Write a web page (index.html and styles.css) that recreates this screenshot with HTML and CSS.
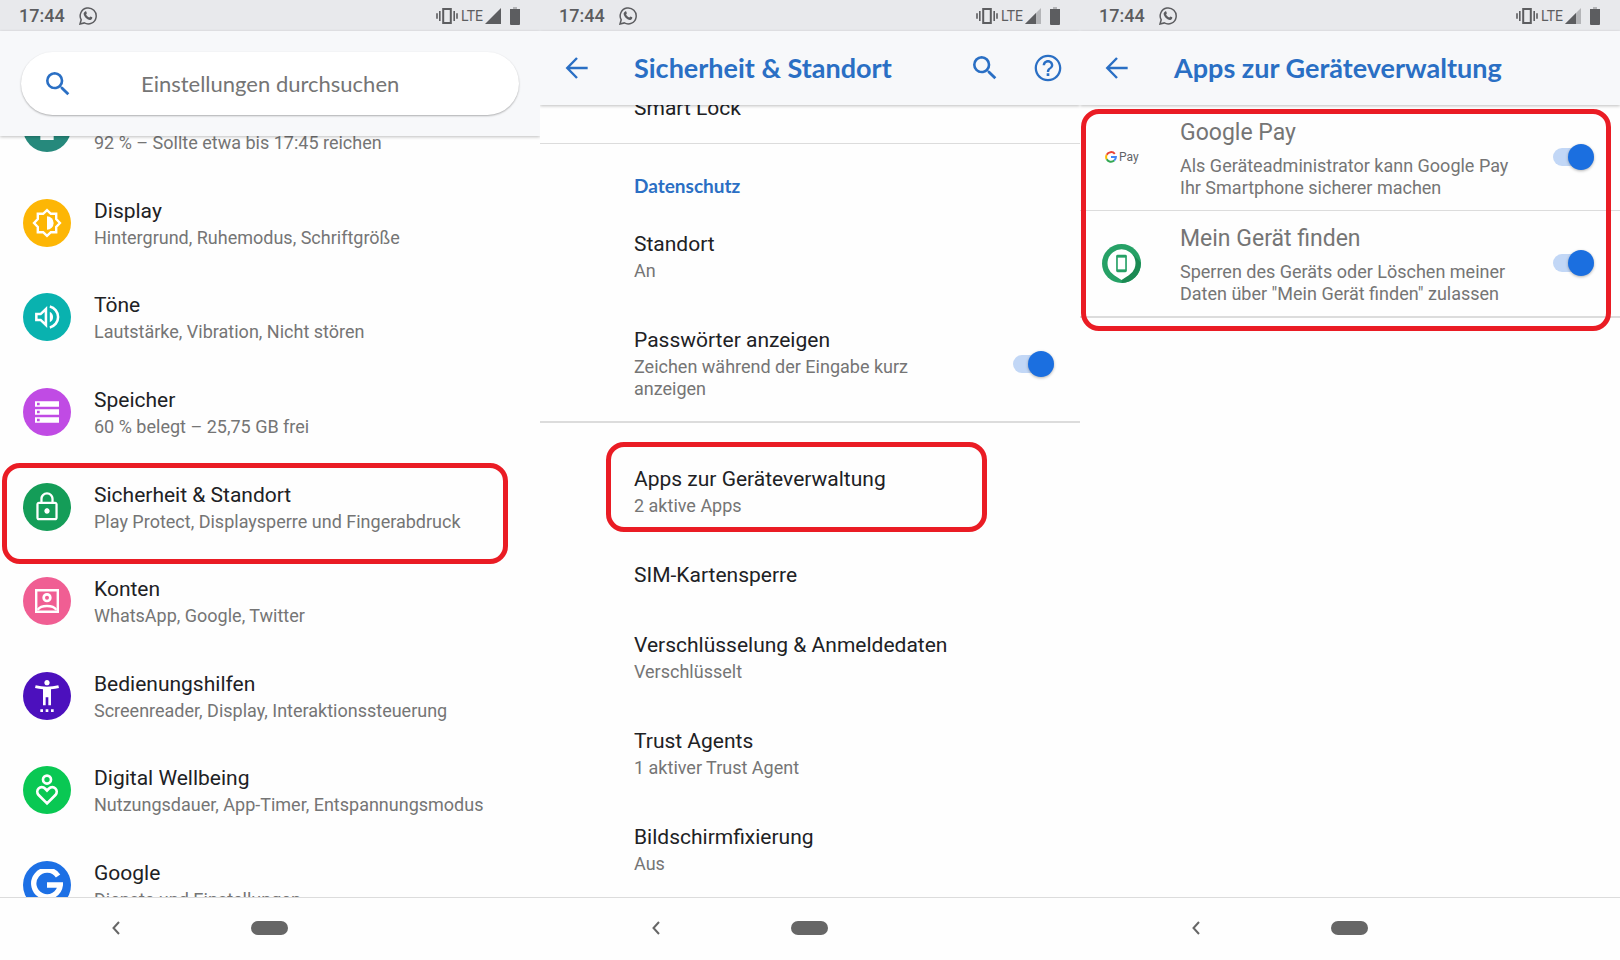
FILE: index.html
```html
<!DOCTYPE html>
<html lang="de">
<head>
  <meta charset="UTF-8">
  <meta name="viewport" content="width=device-width, initial-scale=1.0">
  <title>Einstellungen</title>
  <link rel="stylesheet" href="styles.css">
</head>
<body>

  <!-- Shared icons -->
  <svg class="sprite" aria-hidden="true">
    <symbol id="whatsapp" viewBox="0 0 18 18">
      <path d="M1 17l1.200-4.200A8 8 0 1 1 5.300 15.900z" fill="none" stroke="currentColor" stroke-width="1.500"/>
      <path d="M6.100 4.400c.4-.3.900-.2 1.100.2l.7 1.700-.8 1.200c.7 1.400 1.700 2.400 3.200 3l1.100-1.100 1.900.9c.2 1.500-.9 2.700-2.300 2.600-3.400-.5-6.100-3.400-6.400-6.200 0-.9.700-1.800 1.500-2.300z" fill="currentColor"/>
    </symbol>
    <symbol id="vibration" viewBox="0 0 22 18">
      <path d="M7.200 1.900h7.600v14.200H7.200z" fill="none" stroke="currentColor" stroke-width="2"/>
      <path d="M3.800 4v10M18.200 4v10M1 6.200v5.600M21 6.200v5.600" stroke="currentColor" stroke-width="1.600"/>
    </symbol>
    <symbol id="battery" viewBox="0 0 10 18">
      <path d="M3 0h4v2H3z" fill="#b4b5b8"/>
      <path d="M0 2h10v15a1 1 0 0 1-1 1H1a1 1 0 0 1-1-1z" fill="currentColor"/>
    </symbol>
    <symbol id="search" viewBox="0 0 24 24">
      <path fill="currentColor" d="M15.500 14h-.79l-.28-.27A6.471 6.471 0 0 0 16 9.500 6.500 6.500 0 1 0 9.500 16c1.610 0 3.090-.59 4.230-1.570l.27.28v.79l5 4.990L20.490 19l-4.990-5zm-6 0C7.010 14 5 11.990 5 9.500S7.010 5 9.500 5 14 7.010 14 9.500 11.990 14 9.500 14z"/>
    </symbol>
    <symbol id="arrow" viewBox="0 0 24 24">
      <path d="M20 12H5M12 4.500L4.700 12l7.300 7.500" fill="none" stroke="currentColor" stroke-width="1.800"/>
    </symbol>
    <symbol id="chevron" viewBox="0 0 8 14">
      <path d="M7 1L1.500 7 7 13" fill="none" stroke="currentColor" stroke-width="2"/>
    </symbol>
  </svg>

  <main class="screens">

    <!-- Screen 1: settings overview -->
    <section class="screen">
      <div class="status-bar">
        <span class="clock">17:44</span>
        <svg class="status-chat"><use href="#whatsapp"/></svg>
        <svg class="status-vibration"><use href="#vibration"/></svg>
        <span class="network">LTE</span>
        <svg class="status-signal" viewBox="0 0 16 16"><path d="M16 0v16H0z" fill="currentColor"/></svg>
        <svg class="status-battery"><use href="#battery"/></svg>
      </div>

      <header class="search-header">
        <label class="search-box">
          <svg class="icon"><use href="#search"/></svg>
          <input type="search" placeholder="Einstellungen durchsuchen" aria-label="Einstellungen durchsuchen">
        </label>
      </header>

      <div class="content">
        <nav class="overview">
          <a class="entry" href="#">
            <span class="badge battery">
              <svg class="icon" viewBox="0 0 24 24"><path fill="#fff" d="M17 4h-3V2h-4v2H7v17h10z"/></svg>
            </span>
            <span class="text"><span class="title">Akku</span><span class="summary">92 % – Sollte etwa bis 17:45 reichen</span></span>
          </a>
          <a class="entry" href="#">
            <span class="badge display">
              <svg class="icon" viewBox="0 0 24 24">
                <path d="M12 2.300l2.900 2.800h4v4l2.800 2.900-2.800 2.900v4h-4L12 21.700l-2.900-2.800h-4v-4L2.300 12l2.800-2.900v-4h4z" fill="none" stroke="#fff" stroke-width="1.800"/>
                <path d="M12 7a5 5 0 0 1 0 10z" fill="#fff"/>
              </svg>
            </span>
            <span class="text"><span class="title">Display</span><span class="summary">Hintergrund, Ruhemodus, Schriftgröße</span></span>
          </a>
          <a class="entry" href="#">
            <span class="badge sound">
              <svg class="icon" viewBox="0 0 24 24">
                <path d="M4 9.800h3.200l4-3.800v12l-4-3.800H4z" fill="none" stroke="#fff" stroke-width="1.900"/>
                <path d="M14.100 8a4.500 4.500 0 0 1 0 8z" fill="#fff"/>
                <path d="M14.100 4.200a8 8 0 0 1 0 15.600" fill="none" stroke="#fff" stroke-width="1.900"/>
              </svg>
            </span>
            <span class="text"><span class="title">Töne</span><span class="summary">Lautstärke, Vibration, Nicht stören</span></span>
          </a>
          <a class="entry" href="#">
            <span class="badge storage">
              <svg class="icon" viewBox="0 0 24 24">
                <path fill="#fff" fill-rule="evenodd" d="M3 4h18v4H3zM4.500 5v2h2V5zM3 10h18v4H3zM4.500 11v2h2v-2zM3 16h18v4H3zM4.500 17v2h2v-2z"/>
              </svg>
            </span>
            <span class="text"><span class="title">Speicher</span><span class="summary">60 % belegt – 25,75 GB frei</span></span>
          </a>
          <a class="entry marked" href="#">
            <span class="badge security">
              <svg class="icon" viewBox="0 0 24 24">
                <path fill="#fff" d="M12 17c1.100 0 2-.9 2-2s-.9-2-2-2-2 .9-2 2 .9 2 2 2zm6-9h-1V6c0-2.760-2.240-5-5-5S7 3.240 7 6v2H6c-1.100 0-2 .9-2 2v10c0 1.100.9 2 2 2h12c1.100 0 2-.9 2-2V10c0-1.100-.9-2-2-2zM8.700 6c0-1.800 1.500-3.300 3.300-3.300s3.300 1.500 3.300 3.300v2H8.700V6zM18.300 20.300H5.700V9.700h12.600z"/>
              </svg>
            </span>
            <span class="text"><span class="title">Sicherheit &amp; Standort</span><span class="summary">Play Protect, Displaysperre und Fingerabdruck</span></span>
          </a>
          <a class="entry" href="#">
            <span class="badge accounts">
              <svg class="icon" viewBox="0 0 24 24" fill="none" stroke="#fff" stroke-width="1.800">
                <path d="M3.900 3.900h16.200v16.200H3.900z"/>
                <circle cx="12" cy="9.500" r="2.500" stroke-width="2"/>
                <path d="M5 18.600c2.500-3.800 11.500-3.800 14 0"/>
              </svg>
            </span>
            <span class="text"><span class="title">Konten</span><span class="summary">WhatsApp, Google, Twitter</span></span>
          </a>
          <a class="entry" href="#">
            <span class="badge accessibility">
              <svg class="icon" viewBox="0 0 24 24">
                <path fill="#fff" d="M20.500 4c-2.610.7-5.670 1-8.500 1s-5.890-.3-8.500-1L3 6c1.860.5 4 .83 6 1v12h2v-6h2v6h2V7c2-.17 4.140-.5 6-1l-.5-2zM12 4c1.100 0 2-.9 2-2s-.9-2-2-2-2 .9-2 2 .9 2 2 2zM7 24h2v-2H7v2zm4 0h2v-2h-2v2zm4 0h2v-2h-2v2z"/>
              </svg>
            </span>
            <span class="text"><span class="title">Bedienungshilfen</span><span class="summary">Screenreader, Display, Interaktionssteuerung</span></span>
          </a>
          <a class="entry" href="#">
            <span class="badge wellbeing">
              <svg class="icon" viewBox="0 0 24 24" fill="none" stroke="#fff" stroke-width="2">
                <circle cx="12" cy="4.200" r="3"/>
                <path d="M12 22l-6.300-6.200c-3-3.400 1.500-8.300 5-4.700L12 12.400l1.300-1.300c3.500-3.600 8 1.300 5 4.700z"/>
              </svg>
            </span>
            <span class="text"><span class="title">Digital Wellbeing</span><span class="summary">Nutzungsdauer, App-Timer, Entspannungsmodus</span></span>
          </a>
          <a class="entry" href="#">
            <span class="badge google">
              <svg class="icon" viewBox="0 0 24 24">
                <path d="M20.300 5.200A10 10 0 1 0 22 12H12" fill="none" stroke="#fff" stroke-width="4"/>
              </svg>
            </span>
            <span class="text"><span class="title">Google</span><span class="summary">Dienste und Einstellungen</span></span>
          </a>
        </nav>
      </div>

      <footer class="nav-bar">
        <button class="nav-back" type="button" aria-label="Zurück"><svg><use href="#chevron"/></svg></button>
        <button class="nav-home" type="button" aria-label="Startseite"></button>
      </footer>
    </section>

    <!-- Screen 2: security and location -->
    <section class="screen">
      <div class="status-bar">
        <span class="clock">17:44</span>
        <svg class="status-chat"><use href="#whatsapp"/></svg>
        <svg class="status-vibration"><use href="#vibration"/></svg>
        <span class="network">LTE</span>
        <svg class="status-signal" viewBox="0 0 16 16"><path d="M16 0v16H0z" fill="#b4b5b8"/><path d="M11 5v11H0z" fill="currentColor"/></svg>
        <svg class="status-battery"><use href="#battery"/></svg>
      </div>

      <header class="app-header">
        <button type="button" aria-label="Zurück"><svg class="icon"><use href="#arrow"/></svg></button>
        <h1>Sicherheit &amp; Standort</h1>
        <button type="button" aria-label="Suchen"><svg class="icon"><use href="#search"/></svg></button>
        <button type="button" aria-label="Hilfe">
          <svg class="icon" viewBox="0 0 24 24">
            <path fill="currentColor" d="M11 18h2v-2h-2v2zm1-16C6.480 2 2 6.480 2 12s4.480 10 10 10 10-4.480 10-10S17.520 2 12 2zm0 18.300c-4.600 0-8.300-3.700-8.300-8.300S7.400 3.700 12 3.700s8.300 3.700 8.300 8.300-3.700 8.300-8.300 8.300zM12 6c-2.210 0-4 1.790-4 4h1.800c0-1.200 1-2.200 2.200-2.200s2.200 1 2.200 2.200c0 2-3.100 1.750-3.100 5h1.800c0-2.250 3.100-2.500 3.100-5 0-2.210-1.790-4-4-4z"/>
          </svg>
        </button>
      </header>

      <div class="content">
        <div class="details">
          <div class="group">
            <a class="item" href="#"><span class="title">Smart Lock</span></a>
          </div>
          <div class="group privacy">
            <h2>Datenschutz</h2>
            <a class="item" href="#"><span class="title">Standort</span><span class="summary">An</span></a>
            <label class="item switch-item">
              <span class="text">
                <span class="title">Passwörter anzeigen</span>
                <span class="summary">Zeichen während der Eingabe kurz anzeigen</span>
              </span>
              <input class="switch" type="checkbox" checked>
            </label>
          </div>
          <div class="group more">
            <a class="item marked" href="#"><span class="title">Apps zur Geräteverwaltung</span><span class="summary">2 aktive Apps</span></a>
            <a class="item" href="#"><span class="title">SIM-Kartensperre</span></a>
            <a class="item" href="#"><span class="title">Verschlüsselung &amp; Anmeldedaten</span><span class="summary">Verschlüsselt</span></a>
            <a class="item" href="#"><span class="title">Trust Agents</span><span class="summary">1 aktiver Trust Agent</span></a>
            <a class="item" href="#"><span class="title">Bildschirmfixierung</span><span class="summary">Aus</span></a>
          </div>
        </div>
      </div>

      <footer class="nav-bar">
        <button class="nav-back" type="button" aria-label="Zurück"><svg><use href="#chevron"/></svg></button>
        <button class="nav-home" type="button" aria-label="Startseite"></button>
      </footer>
    </section>

    <!-- Screen 3: device admin apps -->
    <section class="screen">
      <div class="status-bar">
        <span class="clock">17:44</span>
        <svg class="status-chat"><use href="#whatsapp"/></svg>
        <svg class="status-vibration"><use href="#vibration"/></svg>
        <span class="network">LTE</span>
        <svg class="status-signal" viewBox="0 0 16 16"><path d="M16 0v16H0z" fill="#b4b5b8"/><path d="M11 5v11H0z" fill="currentColor"/></svg>
        <svg class="status-battery"><use href="#battery"/></svg>
      </div>

      <header class="app-header">
        <button type="button" aria-label="Zurück"><svg class="icon"><use href="#arrow"/></svg></button>
        <h1>Apps zur Geräteverwaltung</h1>
      </header>

      <div class="content">
        <div class="admin-apps marked">
          <label class="admin-app">
            <span class="app-icon pay">
              <svg viewBox="0 0 12 12" fill="none" stroke-width="2">
                <path d="M9.800 2.900A4.900 4.900 0 0 0 1.700 3.700" stroke="#ea4335"/>
                <path d="M1.700 3.700a4.900 4.900 0 0 0 0 4.600" stroke="#fbbc05"/>
                <path d="M1.700 8.300a4.900 4.900 0 0 0 7.500 1.300" stroke="#34a853"/>
                <path d="M9.200 9.600A4.900 4.900 0 0 0 10.900 6H6" stroke="#4285f4"/>
              </svg>
              <span>Pay</span>
            </span>
            <span class="text">
              <span class="title">Google Pay</span>
              <span class="summary">Als Geräteadministrator kann Google Pay Ihr Smartphone sicherer machen</span>
            </span>
            <input class="switch" type="checkbox" checked>
          </label>
          <label class="admin-app">
            <span class="app-icon">
              <svg class="find-icon" viewBox="0 0 40 40">
                <circle cx="20" cy="20" r="20" fill="#26a166"/>
                <path d="M32 11l7.700 7.700A20 20 0 0 1 20.500 40L20 36z" fill="#1b8a53"/>
                <path d="M20 5.500a14.300 14.300 0 0 1 7.500 26.500L20 37l-7.500-5A14.300 14.300 0 0 1 20 5.500z" fill="#fff"/>
                <rect x="14.500" y="11" width="11" height="18" rx="1.500" fill="#26a166"/>
                <path d="M16.200 14h7.600v12h-7.600z" fill="#fff"/>
              </svg>
            </span>
            <span class="text">
              <span class="title">Mein Gerät finden</span>
              <span class="summary">Sperren des Geräts oder Löschen meiner Daten über "Mein Gerät finden" zulassen</span>
            </span>
            <input class="switch" type="checkbox" checked>
          </label>
        </div>
      </div>

      <footer class="nav-bar">
        <button class="nav-back" type="button" aria-label="Zurück"><svg><use href="#chevron"/></svg></button>
        <button class="nav-home" type="button" aria-label="Startseite"></button>
      </footer>
    </section>

  </main>

</body>
</html>
```

FILE: styles.css
```css
* {
  box-sizing: border-box;
}

body {
  margin: 0;
  font-family: Roboto, "Liberation Sans", sans-serif;
  background-color: #fefefe;
  color: #202124;
}

a {
  color: inherit;
  text-decoration: none;
}

button {
  display: flex;
  padding: 0;
  border: none;
  background: none;
  color: inherit;
  cursor: pointer;
}

.sprite {
  display: none;
}

.icon {
  display: block;
  flex: none;
  width: 32px;
  height: 32px;
}

.screens {
  display: grid;
  grid-template-columns: repeat(3, minmax(0, 1fr));
  height: 100vh;
}

.screen {
  display: flex;
  flex-direction: column;
  min-height: 0;
  overflow: hidden;
}

/* Status bar */
.status-bar {
  display: flex;
  flex: none;
  align-items: center;
  height: 31px;
  padding: 0 20px 0 19px;
  background-color: #e8e9ec;
  color: #5c5d60;
}

.clock {
  font-size: 18px;
  font-weight: 500;
  line-height: 31px;
}

.status-chat {
  width: 18px;
  height: 18px;
  margin-left: 14px;
}

.status-vibration {
  width: 22px;
  height: 18px;
  margin-left: auto;
  margin-right: 3px;
}

.network {
  font-size: 14px;
}

.status-signal {
  width: 16px;
  height: 16px;
  margin-left: 2px;
}

.status-battery {
  width: 10px;
  height: 18px;
  margin-left: 9px;
}

/* Headers */
.search-header,
.app-header {
  position: relative;
  z-index: 1;
  flex: none;
  background-color: #f7f8fa;
  box-shadow: 0 1px 3px rgba(0, 0, 0, 0.25);
}

.search-header {
  padding: 21px;
}

.search-box {
  display: flex;
  align-items: center;
  height: 63px;
  padding: 0 21px;
  border-radius: 32px;
  background-color: #fff;
  box-shadow: 0 1px 2px rgba(0, 0, 0, 0.3);
  color: #2a6fc4;
}

.search-box input {
  flex: 1;
  min-width: 0;
  margin-left: 67px;
  padding: 0;
  border: none;
  outline: none;
  background: none;
  font-family: Lato, Roboto, sans-serif;
  font-size: 22px;
}

.search-box input::placeholder {
  color: #757575;
  opacity: 1;
}

.app-header {
  display: flex;
  align-items: center;
  gap: 31px;
  height: 74px;
  padding: 0 16px 0 21px;
  color: #2a6fc4;
}

.app-header h1 {
  flex: 1;
  margin: 0 0 0 10px;
  font-family: Lato, Roboto, sans-serif;
  font-size: 27px;
  font-weight: 700;
  line-height: 32px;
  white-space: nowrap;
}

/* Lists */
.content {
  display: flex;
  flex: 1;
  flex-direction: column;
  min-height: 0;
  overflow: hidden;
}

.title,
.summary {
  display: block;
}

.title {
  font-size: 21px;
  line-height: 24px;
}

.summary {
  margin-top: 4px;
  color: #757575;
  font-size: 18px;
  line-height: 22px;
}

/* The overview is scrolled, so it runs past both ends of the content area */
.overview {
  display: flex;
  flex: 1 0 auto;
  flex-direction: column;
  margin: -54px 0 -36px;
}

.entry {
  position: relative;
  display: flex;
  flex: 1;
  align-items: center;
  gap: 23px;
  padding: 0 23px;
  white-space: nowrap;
}

.badge {
  display: flex;
  flex: none;
  align-items: center;
  justify-content: center;
  width: 48px;
  height: 48px;
  margin-bottom: 2px;
  border-radius: 50%;
}

.badge.battery {
  background-color: #26897c;
}

.badge.display {
  background-color: #fdb605;
}

.badge.sound {
  background-color: #09b2af;
}

.badge.storage {
  background-color: #c04be4;
}

.badge.security {
  background-color: #149d58;
}

.badge.accounts {
  background-color: #f05e93;
}

.badge.accessibility {
  background-color: #4c10bd;
}

.badge.wellbeing {
  background-color: #09c853;
}

.badge.google {
  background-color: #1d70e5;
}

.details {
  margin-top: -32px;
}

.group {
  border-bottom: 1px solid #dcdcdc;
}

.group h2 {
  margin: 0;
  padding: 30px 94px 11px;
  color: #2a6fc4;
  font-family: Lato, Roboto, sans-serif;
  font-size: 19px;
  font-weight: 700;
  line-height: 24px;
}

.group.privacy {
  border-bottom-width: 2px;
}

.group.more {
  padding-top: 21px;
  border-bottom: none;
}

.item {
  position: relative;
  display: block;
  padding: 23px 94px;
}

.switch-item {
  display: flex;
  align-items: center;
  gap: 64px;
  padding: 23px 26px 21px 94px;
}

.text {
  flex: 1;
}

/* Switch */
.switch {
  display: flex;
  flex: none;
  align-items: center;
  width: 41px;
  height: 18px;
  margin: 0;
  border-radius: 9px;
  background-color: #c2d7f6;
  appearance: none;
  cursor: pointer;
}

.switch::before {
  content: "";
  width: 26px;
  height: 26px;
  border-radius: 50%;
  background-color: #1b6fe0;
  box-shadow: 0 1px 3px rgba(0, 0, 0, 0.3);
}

.switch:checked {
  justify-content: flex-end;
}

/* Device admin apps */
.admin-apps {
  position: relative;
}

.admin-app {
  display: flex;
  align-items: center;
  padding: 14px 26px 11px 22px;
  border-bottom: 1px solid #dcdcdc;
}

.admin-app:last-child {
  border-bottom-width: 2px;
}

.admin-app .text {
  padding-right: 32px;
}

.admin-app .title {
  color: #757575;
  font-size: 23px;
  line-height: 28px;
}

.admin-app .summary {
  margin-top: 8px;
}

.admin-app .switch,
.app-icon {
  margin-bottom: 4px;
}

.app-icon {
  display: flex;
  flex: none;
  align-items: center;
  width: 78px;
}

.find-icon {
  width: 39px;
  height: 39px;
}

.app-icon.pay {
  gap: 2px;
  padding-left: 3px;
  color: #5f6368;
  font-size: 12px;
}

.app-icon.pay svg {
  width: 12px;
  height: 12px;
}

/* Red highlight frames */
.marked::after {
  content: "";
  position: absolute;
  border: 5px solid #ea1c24;
  border-radius: 18px;
  pointer-events: none;
}

.entry.marked::after {
  inset: 3px 32px -9px 2px;
}

.item.marked::after {
  inset: -2px 93px 8px 66px;
}

.admin-apps.marked::after {
  inset: 4px 9px -13px 1px;
}

/* Navigation bar */
.nav-bar {
  display: grid;
  grid-template-columns: 1fr auto 1fr;
  flex: none;
  align-items: center;
  height: 63px;
  padding: 0 2px 2px 0;
  border-top: 1px solid #dcdcdc;
  color: #666;
}

.nav-back {
  justify-self: center;
  margin-left: -18px;
}

.nav-back svg {
  width: 8px;
  height: 14px;
}

.nav-home {
  width: 37px;
  height: 14px;
  border-radius: 7px;
  background-color: #666;
}
```
